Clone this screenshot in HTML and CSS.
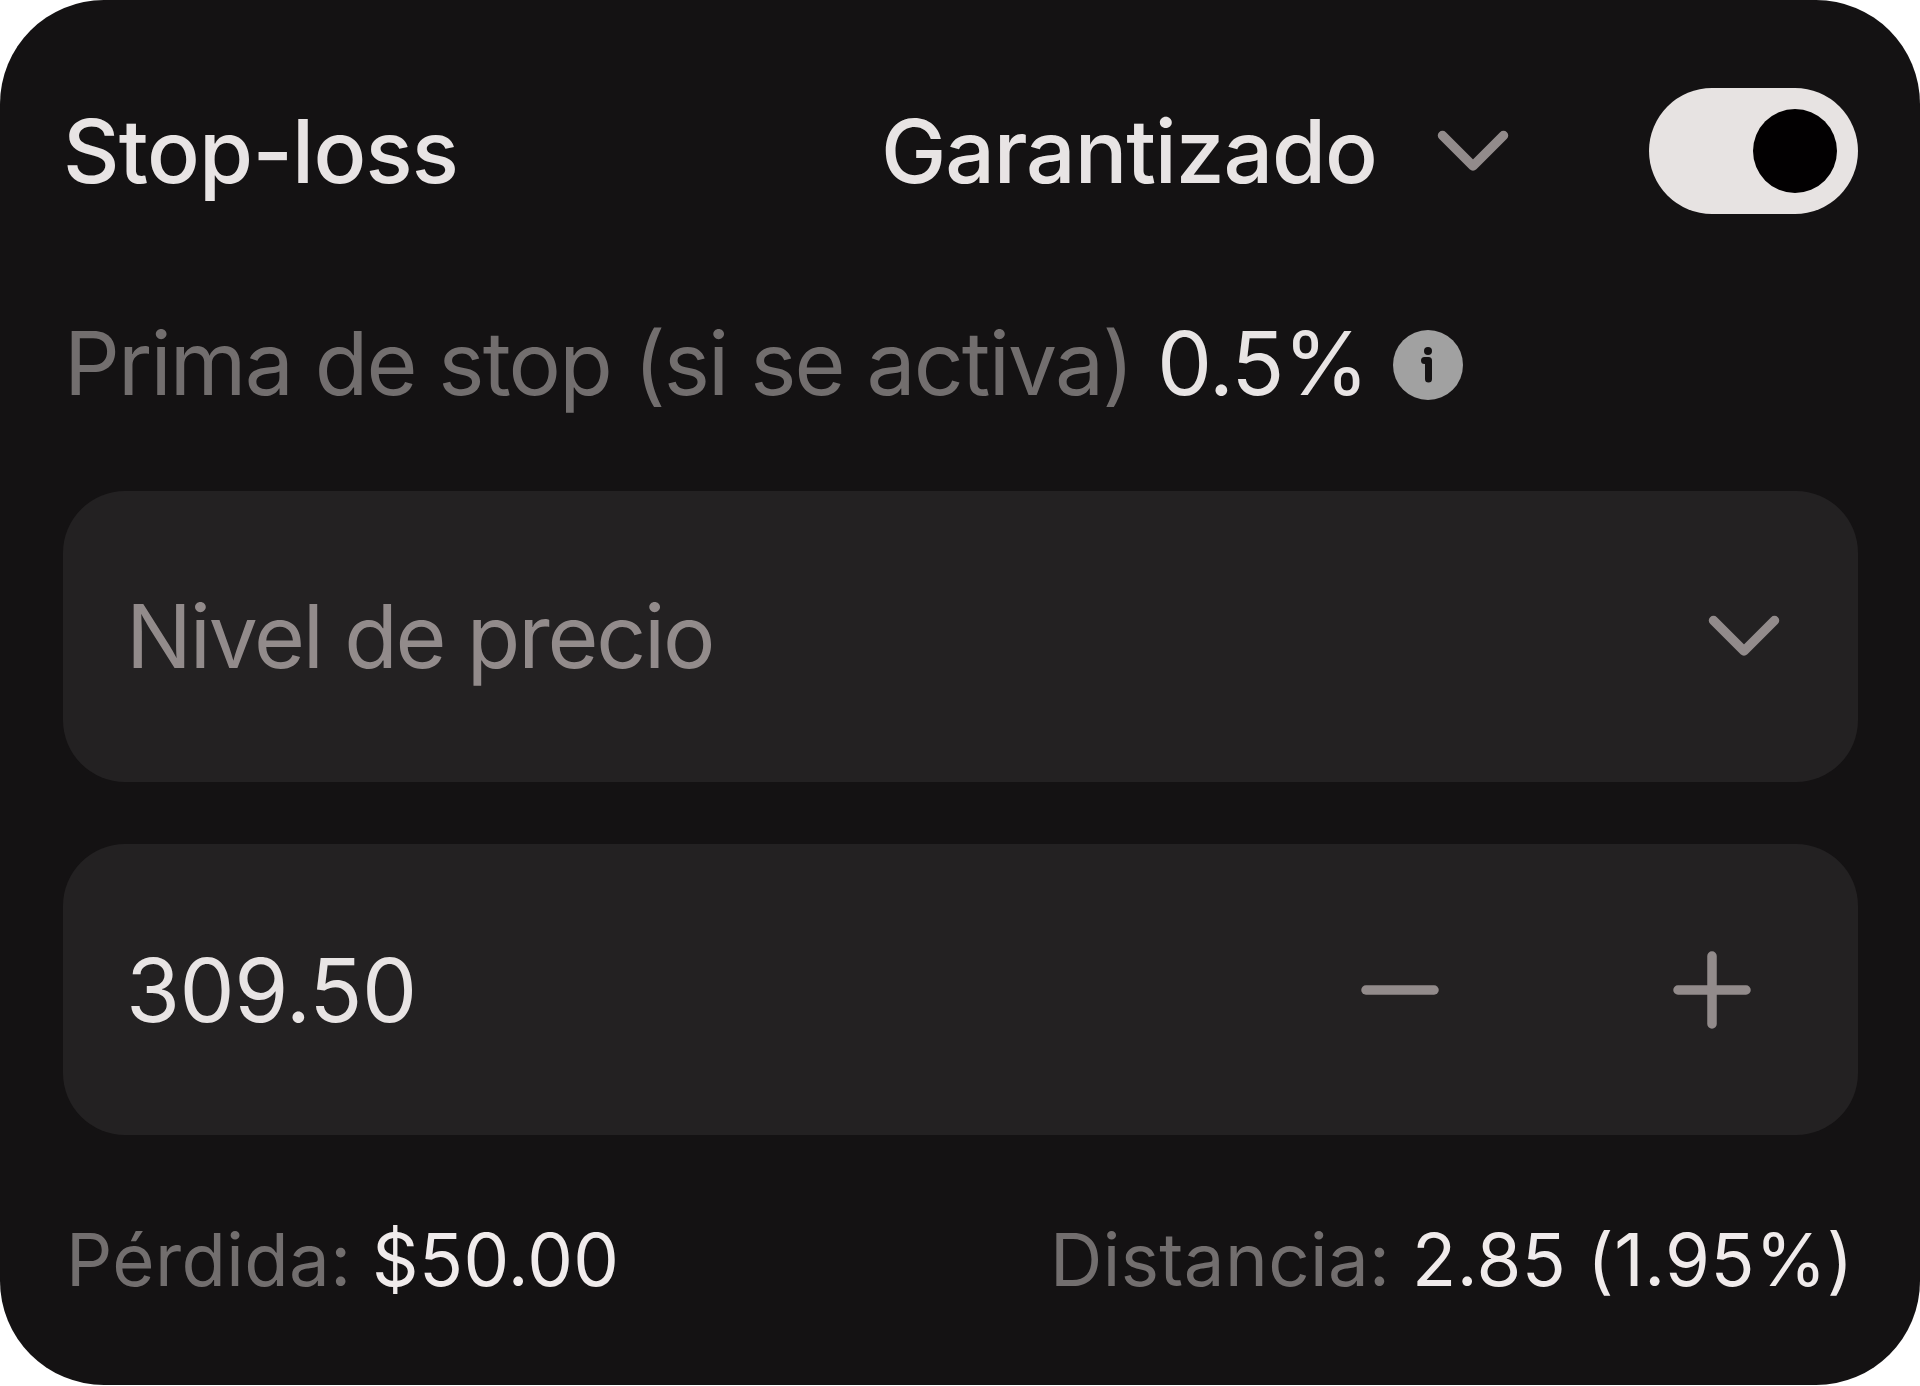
FILE: index.html
```html
<!DOCTYPE html>
<html lang="es">
<head>
    <meta charset="UTF-8">
    <meta name="viewport" content="width=device-width, initial-scale=1.0">
    <title>Stop-loss</title>
    <link rel="stylesheet" href="styles.css">
</head>
<body>
    <div class="card">
        <div class="header">
            <span class="title">Stop-loss</span>
            <div class="type">
                <span class="type-name">Garantizado</span>
                <svg class="chevron" viewBox="0 0 72 42">
                    <path d="M5.5 5.5 L36 36 L66.500 5.5"/>
                </svg>
            </div>
            <div class="toggle"><div class="knob"></div></div>
        </div>

        <div class="premium">
            <span class="premium-label">Prima de stop (si se activa)</span>
            <span class="premium-value">0.5%</span>
            <svg class="info" viewBox="0 0 70 70">
                <circle cx="35" cy="35" r="35" fill="#a1a1a1"/>
                <circle cx="35" cy="21" r="4" fill="#141213"/>
                <path d="M31.500 30.500 H35.500 V49" fill="none" stroke="#141213" stroke-width="7" stroke-linecap="round" stroke-linejoin="round"/>
            </svg>
        </div>

        <div class="field">
            <span class="field-label">Nivel de precio</span>
            <svg class="chevron" viewBox="0 0 72 42">
                <path d="M5.5 5.5 L36 36 L66.500 5.5"/>
            </svg>
        </div>

        <div class="field stepper">
            <span class="field-value">309.50</span>
            <svg class="step" viewBox="0 0 78 78">
                <path d="M5 39 H73"/>
            </svg>
            <svg class="step" viewBox="0 0 78 78">
                <path d="M5 39 H73 M39 5 V73"/>
            </svg>
        </div>

        <div class="footer">
            <div class="stat">
                <span class="stat-label loss">Pérdida:</span>
                <span class="stat-value amount">$50.00</span>
            </div>
            <div class="stat">
                <span class="stat-label distance">Distancia:</span>
                <span class="stat-value points">2.85 (1.95%)</span>
            </div>
        </div>
    </div>
</body>
</html>
```
FILE: styles.css
```css
body {
  margin: 0;
  background-color: #fff;
  font-family: Inter, "Liberation Sans", sans-serif;
}

.card {
  box-sizing: border-box;
  width: 1920px;
  height: 1385px;
  padding: 88px 62px 0 63px;
  border-radius: 104px;
  background-color: #141213;
  color: #e8e4e4;
  font-size: 87.5px;
  line-height: 100px;
  white-space: nowrap;
}

.header {
  display: flex;
  align-items: center;
  height: 126px;
}

.title, .type-name {
  font-weight: 500;
}

.title {
  letter-spacing: -0.75px;
}

.type-name {
  letter-spacing: -1.15px;
}

.type {
  display: flex;
  align-items: center;
  justify-content: space-between;
  width: 628px;
  margin-left: auto;
  margin-right: 140px;
}

.toggle {
  box-sizing: border-box;
  display: flex;
  justify-content: flex-end;
  width: 209px;
  height: 126px;
  padding: 21px;
  border-radius: 63px;
  background-color: #e7e3e2;
}

.knob {
  width: 84px;
  height: 84px;
  border-radius: 50%;
  background-color: #020001;
}

.chevron {
  width: 72px;
  height: 42px;
}

.chevron path, .step path {
  fill: none;
  stroke: #928b8b;
  stroke-width: 9.5;
  stroke-linecap: round;
  stroke-linejoin: round;
}

.premium {
  display: flex;
  align-items: center;
  height: 100px;
  margin-top: 99px;
}

.premium-label {
  box-sizing: border-box;
  width: 1094px;
  padding-left: 1px;
  color: #726e6e;
  letter-spacing: -1.85px;
}

.premium-value {
  width: 236px;
  letter-spacing: -1.3px;
}

.info {
  width: 70px;
  height: 70px;
  margin-top: 4px;
}

.field {
  box-sizing: border-box;
  display: flex;
  align-items: center;
  height: 291px;
  margin-top: 77.5px;
  padding: 0 78px 0 63px;
  border-radius: 62px;
  background-color: #232122;
}

.field-label {
  flex: 1;
  color: #928b8b;
  letter-spacing: -2.2px;
}

.field-value {
  flex: 1;
  letter-spacing: -0.5px;
}

.stepper {
  margin-top: 62.5px;
  padding-right: 107px;
}

.step {
  width: 78px;
  height: 78px;
}

.step + .step {
  margin-left: 234px;
}

.footer {
  display: flex;
  justify-content: space-between;
  margin-top: 80px;
  font-size: 72.5px;
  line-height: 90px;
  letter-spacing: 0.4px;
}

.stat {
  display: flex;
}

.stat-label {
  box-sizing: border-box;
  color: #726e6e;
}

.loss {
  width: 309px;
  padding-left: 3px;
}

.distance {
  width: 362px;
}

.points {
  width: 446px;
  letter-spacing: 0.5px;
}

.stat-value {
  color: #f0ebeb;
}
```
